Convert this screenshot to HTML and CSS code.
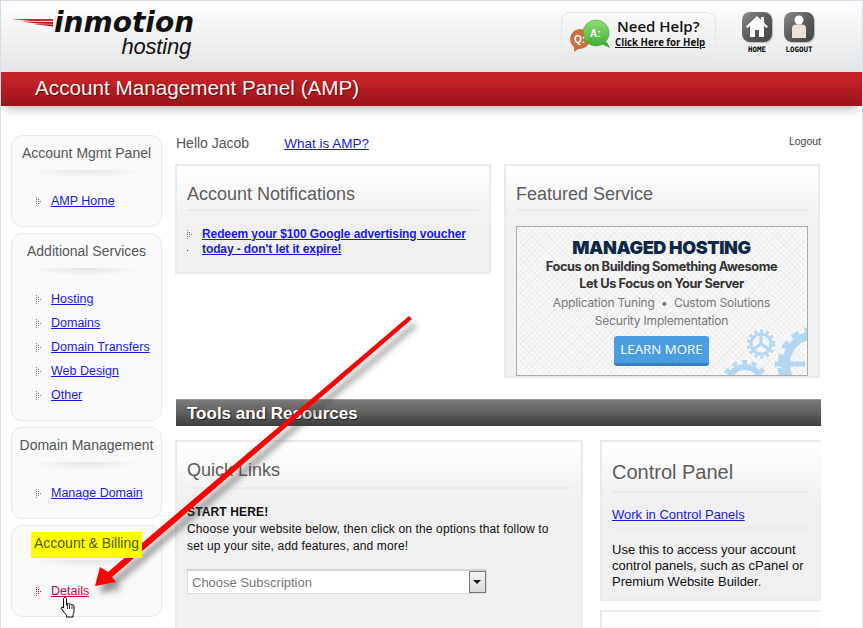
FILE: index.html
```html
<!DOCTYPE html>
<html lang="en">
<head>
    <meta charset="UTF-8">
    <meta name="viewport" content="width=device-width, initial-scale=1.0">
    <title>Account Management Panel (AMP)</title>
    <link rel="stylesheet" href="styles.css">
</head>
<body>
    <svg class="defs" width="0" height="0">
        <symbol id="dots" viewBox="0 0 6 9">
            <rect x="0" y="0" width="1" height="1"/><rect x="0" y="2" width="1" height="1"/>
            <rect x="0" y="4" width="1" height="1"/><rect x="0" y="6" width="1" height="1"/>
            <rect x="0" y="8" width="1" height="1"/><rect x="2" y="2" width="1" height="1"/>
            <rect x="2" y="4" width="1" height="1"/><rect x="2" y="6" width="1" height="1"/>
            <rect x="4" y="4" width="1" height="1"/>
        </symbol>
    </svg>
    <div class="page">
        <header class="top">
            <a class="logo" href="#">
                <span class="logo-main">
                    <svg class="swoosh" width="42" height="9" viewBox="0 0 42 9">
                        <polygon points="0,1 42,1 42,3 20,3" fill="#d8262c"/>
                        <polygon points="10,3.6 42,4 42,6 26,5.4" fill="#c4161c"/>
                        <polygon points="22,6 42,6.6 42,8.6" fill="#a81218"/>
                    </svg>
                    <span class="logo-name">inmotion</span>
                </span>
                <span class="logo-sub">hosting</span>
            </a>
            <div class="top-right">
                <a class="help" href="#">
                    <svg width="42" height="38" viewBox="0 0 42 38">
                        <defs>
                            <linearGradient id="greenfill" x1="0" y1="0" x2="0" y2="1">
                                <stop offset="0" stop-color="#8fdc74"/>
                                <stop offset="1" stop-color="#41b038"/>
                            </linearGradient>
                        </defs>
                        <circle cx="11" cy="23" r="10" fill="#c9703f"/>
                        <polygon points="5,30 11,32 5,36" fill="#c9703f"/>
                        <circle cx="27" cy="17" r="13" fill="url(#greenfill)" stroke="#3fa238" stroke-width=".6"/>
                        <polygon points="30,27 38,26 41,32" fill="#41b038"/>
                        <text x="5" y="27" class="bubble-text">Q:</text>
                        <text x="21" y="21" class="bubble-text">A:</text>
                    </svg>
                    <span class="help-text">
                        <span class="help-title">Need Help?</span>
                        <span class="help-link">Click Here for Help</span>
                    </span>
                </a>
                <a class="tile" href="#">
                    <span class="tile-icon">
                        <svg width="30" height="30" viewBox="0 0 30 30">
                            <path d="M15 4 4 14.500l1.500 1.500L8 13.800V25h5v-7h4v7h5V13.800l2.500 2.200 1.500-1.500-4-3.800V5h-3v3z" fill="#fff"/>
                        </svg>
                    </span>
                    <span class="tile-label">HOME</span>
                </a>
                <a class="tile" href="#">
                    <span class="tile-icon">
                        <svg width="30" height="30" viewBox="0 0 30 30">
                            <circle cx="15" cy="8" r="4.500" fill="#fff"/>
                            <path d="M8 26V16c0-2.500 2-3.500 4-3.500h6c2 0 4 1 4 3.500v10z" fill="#e8e2da"/>
                        </svg>
                    </span>
                    <span class="tile-label">LOGOUT</span>
                </a>
            </div>
        </header>
        <div class="titlebar">Account Management Panel (AMP)</div>

        <div class="content">
            <aside class="sidebar">
                <section class="side-box">
                    <h3>Account Mgmt Panel</h3>
                    <div class="side-rule"></div>
                    <ul class="side-links">
                        <li><svg class="dots"><use href="#dots"/></svg><a href="#">AMP Home</a></li>
                    </ul>
                </section>
                <section class="side-box">
                    <h3>Additional Services</h3>
                    <div class="side-rule"></div>
                    <ul class="side-links">
                        <li><svg class="dots"><use href="#dots"/></svg><a href="#">Hosting</a></li>
                        <li><svg class="dots"><use href="#dots"/></svg><a href="#">Domains</a></li>
                        <li><svg class="dots"><use href="#dots"/></svg><a href="#">Domain Transfers</a></li>
                        <li><svg class="dots"><use href="#dots"/></svg><a href="#">Web Design</a></li>
                        <li><svg class="dots"><use href="#dots"/></svg><a href="#">Other</a></li>
                    </ul>
                </section>
                <section class="side-box">
                    <h3>Domain Management</h3>
                    <div class="side-rule"></div>
                    <ul class="side-links">
                        <li><svg class="dots"><use href="#dots"/></svg><a href="#">Manage Domain</a></li>
                    </ul>
                </section>
                <section class="side-box">
                    <h3><span class="marked">Account &amp; Billing</span></h3>
                    <div class="side-rule"></div>
                    <ul class="side-links">
                        <li class="hover"><svg class="dots"><use href="#dots"/></svg><a href="#">Details</a></li>
                    </ul>
                </section>
            </aside>

            <main class="main">
                <div class="hello">
                    <span>Hello Jacob</span>
                    <a class="what" href="#">What is AMP?</a>
                    <a class="logout" href="#">Logout</a>
                </div>

                <div class="row-top">
                    <section class="panel notes">
                        <h2>Account Notifications</h2>
                        <div class="note">
                            <svg class="dots"><use href="#dots"/></svg>
                            <a href="#">Redeem your $100 Google advertising voucher today - don't let it expire!</a>
                            <span class="red-dot"></span>
                        </div>
                    </section>
                    <section class="panel">
                        <h2>Featured Service</h2>
                        <div class="ad">
                            <svg class="gears" width="122" height="50" viewBox="0 0 122 50">
                                <g fill="none" stroke="#b5d6ef">
                                    <circle cx="76" cy="19" r="10" stroke-width="3"/>
                                    <circle cx="76" cy="19" r="13" stroke-width="3" stroke-dasharray="3 3"/>
                                    <path d="M76 19V9M76 19l9 6M76 19l-9 6" stroke-width="3"/>
                                    <circle cx="130" cy="39" r="29" stroke-width="8"/>
                                    <circle cx="130" cy="39" r="35" stroke-width="5" stroke-dasharray="8 6"/>
                                    <path d="M90 39h30" stroke-width="5"/>
                                    <circle cx="60" cy="59" r="17" stroke-width="6"/>
                                    <circle cx="60" cy="59" r="22" stroke-width="4" stroke-dasharray="5 5"/>
                                </g>
                            </svg>
                            <div class="ad-title">MANAGED HOSTING</div>
                            <div class="ad-lead">Focus on Building Something Awesome</div>
                            <div class="ad-lead">Let Us Focus on Your Server</div>
                            <div class="ad-note first">Application Tuning &nbsp;&bull;&nbsp; Custom Solutions</div>
                            <div class="ad-note">Security Implementation</div>
                            <a class="ad-btn" href="#">LEARN MORE</a>
                        </div>
                    </section>
                </div>

                <div class="tools-bar">Tools and Resources</div>

                <div class="row-bottom">
                    <section class="panel quick">
                        <h2>Quick Links</h2>
                        <p class="start"><strong>START HERE!</strong><br>Choose your website below, then click on the options that follow to set up your site, add features, and more!</p>
                        <div class="fake-select">
                            <span class="fake-value">Choose Subscription</span>
                            <span class="fake-arrow"></span>
                        </div>
                    </section>
                    <div class="right-col">
                        <section class="panel control">
                            <h2>Control Panel</h2>
                            <a class="control-link" href="#">Work in Control Panels</a>
                            <p>Use this to access your account control panels, such as cPanel or Premium Website Builder.</p>
                        </section>
                        <section class="panel next"></section>
                    </div>
                </div>
            </main>
        </div>

        <svg class="arrow" width="863" height="628" viewBox="0 0 863 628">
            <polygon points="409,316 412,319 112,577 116,582 95,586 100,567 108,572" fill="#f00"/>
        </svg>
        <svg class="hand" width="18" height="23" viewBox="0 0 18 23">
            <path d="M5 1.500c1 0 1.500.7 1.500 1.600V9l1-.2V7.500c1.300-.5 2 0 2 1.200.3-.8 2-.8 2.300.4.500-.6 2.200-.4 2.200 1.200v5c0 1.500-.7 2.500-1 3.500v2.200H6.500v-1.800C5 17.500 3 15 1.500 13c-.8-1.200.3-2.300 1.500-1.500L3.500 12V3.100c0-1 .6-1.600 1.500-1.600z" fill="#fff" stroke="#000" stroke-width="1"/>
            <path d="M7.500 9v4M9.500 9v4M12 9.500v3.500" stroke="#000" stroke-width=".8"/>
        </svg>
    </div>
</body>
</html>
```

FILE: styles.css
```css
* {
    box-sizing: border-box;
}

html,
body {
    height: 100%;
}

body {
    margin: 0;
    padding: 1px 1px 0 1px;
    background: #d6dde8;
    font-family: "Liberation Sans", Arial, sans-serif;
    font-size: 12px;
    color: #222;
    overflow: hidden;
}

a {
    color: #1a1adf;
}

.defs {
    position: absolute;
}

.page {
    position: relative;
    height: 627px;
    background: #fff;
    overflow: hidden;
}

/* header */

.top {
    height: 71px;
    display: flex;
    justify-content: space-between;
    background: linear-gradient(#fff, #e3e4e5);
}

.logo {
    margin: 11px 0 0 10px;
    width: 186px;
    color: #111;
    text-decoration: none;
    display: flex;
    flex-direction: column;
}

.logo-main {
    display: flex;
    align-items: center;
    height: 21px;
}

.swoosh {
    flex-shrink: 0;
    margin-right: 1px;
}

.logo-name {
    font-family: "DejaVu Sans", sans-serif;
    font-weight: bold;
    font-style: italic;
    font-size: 28px;
    line-height: 21px;
}

.logo-sub {
    font-style: italic;
    font-size: 22px;
    line-height: 28px;
    text-align: right;
    padding-right: 6px;
    letter-spacing: -0.2px;
}

.top-right {
    display: flex;
    margin: 11px 48px 0 0;
}

.help {
    width: 155px;
    height: 46px;
    border: 1px solid #e6e6e6;
    border-radius: 9px;
    display: flex;
    align-items: center;
    padding-left: 7px;
    gap: 4px;
    color: #111;
    text-decoration: none;
    margin-right: 26px;
}

.bubble-text {
    font-family: "Liberation Sans", sans-serif;
    font-size: 10px;
    font-weight: bold;
    fill: #fff;
}

.help-text {
    display: flex;
    flex-direction: column;
    margin-top: -4px;
}

.help-title {
    font-family: "Open Sans", sans-serif;
    font-size: 15px;
    font-weight: 600;
    line-height: 20px;
    margin-left: 2px;
}

.help-link {
    font-family: "Open Sans", sans-serif;
    font-size: 9.700px;
    font-weight: 700;
    line-height: 14px;
    text-decoration: underline;
    white-space: nowrap;
}

.tile {
    width: 30px;
    margin-right: 12px;
    color: #000;
    text-decoration: none;
    text-align: center;
    display: block;
}

.tile:last-child {
    margin-right: 0;
}

.tile-icon {
    display: block;
    width: 30px;
    height: 30px;
    border-radius: 8px;
    background: linear-gradient(135deg, #8a8a8a, #5c5c5c 50%, #444);
    box-shadow: 1px 1px 1px #bbb;
}

.tile-label {
    display: block;
    margin: 3px -6px 0;
    font-family: "DejaVu Sans Mono", monospace;
    font-weight: bold;
    font-size: 7.500px;
    line-height: 9px;
}

.titlebar {
    height: 34px;
    padding-left: 34px;
    background: linear-gradient(#c32227 25%, #99151a);
    color: #f6f2f2;
    font-size: 20.700px;
    line-height: 32px;
    text-shadow: 1px 1px 1px #5a0c0e;
    box-shadow: 0 8px 8px -4px #c4c4c4;
    position: relative;
}

/* page body */

.content {
    display: flex;
    gap: 13px;
    padding: 29px 41px 0 10px;
}

.sidebar {
    width: 151px;
    flex-shrink: 0;
    display: flex;
    flex-direction: column;
    gap: 6px;
}

.side-box {
    border: 1px solid #e9e9e9;
    border-radius: 11px;
    background: #fafafa;
    padding: 8px 0 13px;
}

.side-box h3 {
    margin: 0;
    font-size: 14px;
    font-weight: normal;
    line-height: 18px;
    color: #555;
    text-align: center;
    white-space: nowrap;
}

.marked {
    display: inline-block;
    background: #ff0;
    margin: -2px 0 -6px;
    padding: 2px 0 6px;
    width: 111px;
    color: #555500;
    line-height: 18px;
    position: relative;
    z-index: 1;
    vertical-align: top;
}

.side-rule {
    height: 8px;
    margin: 8px 18px 11px;
    background: radial-gradient(ellipse at 50% 0, #e6e6e6, rgba(230, 230, 230, 0) 70%);
}

.side-links {
    list-style: none;
    margin: 0;
    padding: 0 0 0 24px;
}

.side-links li {
    height: 24px;
    display: flex;
    align-items: center;
    font-size: 12.500px;
    white-space: nowrap;
}

.dots {
    width: 6px;
    height: 9px;
    flex-shrink: 0;
    fill: #777;
    margin-right: 9px;
}

.hover .dots {
    fill: #d0003c;
}

.hover a {
    color: #c4004a;
}

.main {
    width: 646px;
    flex-shrink: 0;
}

.hello {
    height: 29px;
    display: flex;
    align-items: center;
    padding: 0 0 13px 1px;
    font-size: 14px;
    color: #555;
}

.what {
    margin-left: 35px;
    font-size: 13.500px;
}

.logout {
    margin: 0 0 4px auto;
    font-size: 10.500px;
    color: #444;
    text-decoration: none;
}

.row-top {
    display: grid;
    grid-template-columns: 316px 316px;
    gap: 13px;
    align-items: start;
    height: 224px;
}

.panel {
    border: 2px solid #ebebeb;
    background: linear-gradient(#fff, #f0f0f0 60px);
    padding: 0 10px;
}

.panel h2 {
    margin: 0;
    height: 45px;
    padding-top: 17px;
    border-bottom: 2px solid #ebebeb;
    font-size: 18px;
    font-weight: normal;
    line-height: 22px;
    color: #5c5c5c;
}

.notes {
    height: 110px;
}

.note {
    position: relative;
    display: flex;
    margin-top: 16px;
}

.note .dots {
    margin: 3px 9px 0 0;
}

.note a {
    font-weight: bold;
    line-height: 15px;
    letter-spacing: -0.1px;
}

.red-dot {
    position: absolute;
    left: 0;
    top: 23px;
    width: 1px;
    height: 1px;
    background: #900;
}

.ad {
    position: relative;
    height: 150px;
    margin-top: 15px;
    border: 1px solid #aaa;
    background:
        repeating-linear-gradient(45deg, rgba(0, 0, 0, 0.03) 0 1px, transparent 1px 4px),
        repeating-linear-gradient(-45deg, rgba(0, 0, 0, 0.03) 0 1px, transparent 1px 4px),
        #f8f8f8;
    text-align: center;
    padding: 10px 1px 0 0;
    font-family: "Inter", sans-serif;
    overflow: hidden;
}

.gears {
    position: absolute;
    right: 0;
    bottom: 0;
}

.ad-title {
    position: relative;
    font-size: 18px;
    font-weight: 900;
    line-height: 21px;
    color: #0d2744;
    letter-spacing: -0.4px;
}

.ad-lead {
    position: relative;
    font-size: 12.800px;
    font-weight: 700;
    line-height: 17px;
    color: #333;
    letter-spacing: -0.4px;
}

.ad-note {
    position: relative;
    font-size: 12px;
    line-height: 18px;
    color: #777;
    letter-spacing: -0.2px;
}

.ad-note.first {
    margin-top: 2px;
}

.ad-btn {
    position: relative;
    display: block;
    width: 95px;
    height: 30px;
    margin: 6px auto 0;
    border-radius: 3px;
    background: #4a9ee0;
    border-bottom: 3px solid #3b7fbc;
    color: #fff;
    font-family: "Open Sans", sans-serif;
    font-size: 13.300px;
    line-height: 27px;
    text-decoration: none;
}

.tools-bar {
    height: 27px;
    margin: 11px 0 14px 1px;
    border-top: 1px solid #999;
    padding-left: 11px;
    background: linear-gradient(#7c7c7c, #3f3f3f);
    color: #fff;
    font-size: 17px;
    font-weight: bold;
    line-height: 27px;
    text-shadow: 1px 1px 1px #222;
}

.row-bottom {
    display: grid;
    grid-template-columns: 408px 221px;
    gap: 17px;
    height: 188px;
    overflow: hidden;
}

.quick {
    height: 200px;
}

.quick h2 {
    height: 47px;
    padding-top: 17px;
}

.start {
    margin: 15px 0 0;
    width: 375px;
    line-height: 17px;
    letter-spacing: 0.14px;
    color: #111;
}

.fake-select {
    display: flex;
    width: 300px;
    height: 25px;
    margin-top: 14px;
    border: 1px solid #ddd;
    border-top: 2px solid #d4d4d4;
    background: #fff;
}

.fake-value {
    flex: 1;
    padding-left: 4px;
    font-size: 13px;
    line-height: 24px;
    color: #777;
}

.fake-arrow {
    position: relative;
    width: 17px;
    border: 1px solid #777;
    background: linear-gradient(#f4f4f4, #d8d8d8);
}

.fake-arrow::after {
    content: "";
    position: absolute;
    left: 3px;
    top: 8px;
    border: 4px solid transparent;
    border-top: 4px solid #111;
}

.right-col {
    display: flex;
    flex-direction: column;
    gap: 9px;
    overflow: hidden;
}

.control {
    flex-shrink: 0;
    height: 161px;
    margin-right: -2px;
    padding-right: 11px;
}

.control h2 {
    height: 51px;
    padding-top: 19px;
    font-size: 20px;
}

.control-link {
    display: block;
    height: 36px;
    padding-top: 13px;
    border-bottom: 2px solid #ebebeb;
    font-size: 13px;
    line-height: 18px;
}

.control p {
    margin: 13px 0 0;
    font-size: 13px;
    line-height: 16px;
    color: #111;
}

.next {
    flex-shrink: 0;
    height: 40px;
    margin-right: -2px;
}

/* annotations drawn over the page */

.arrow {
    position: absolute;
    left: -1px;
    top: -1px;
    filter: drop-shadow(5px 7px 3px rgba(60, 60, 60, 0.55));
    pointer-events: none;
}

.hand {
    position: absolute;
    left: 59px;
    top: 595px;
}
```
